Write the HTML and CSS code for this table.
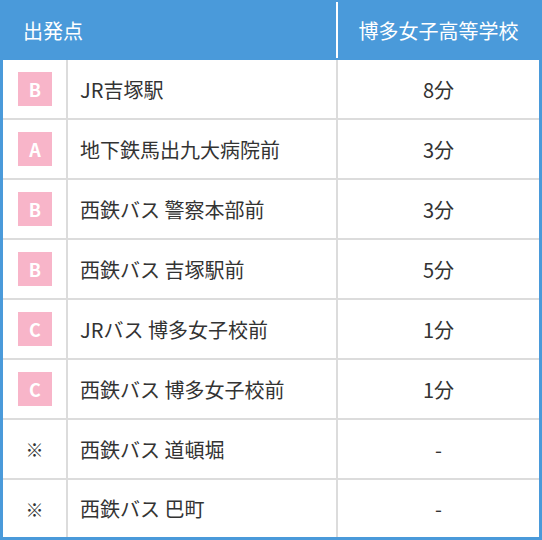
FILE: index.html
```html
<!DOCTYPE html>
<html lang="ja">
<head>
<meta charset="utf-8">
<link rel="stylesheet" href="styles.css">
</head>
<body>
<div class="table">
  <div class="head">
    <div class="head-from">出発点</div>
    <div class="head-school">博多女子高等学校</div>
  </div>
  <div class="row"><div class="mark"><span class="badge">B</span></div><div class="name">JR吉塚駅</div><div class="time">8分</div></div>
  <div class="row"><div class="mark"><span class="badge">A</span></div><div class="name">地下鉄馬出九大病院前</div><div class="time">3分</div></div>
  <div class="row"><div class="mark"><span class="badge">B</span></div><div class="name">西鉄バス 警察本部前</div><div class="time">3分</div></div>
  <div class="row"><div class="mark"><span class="badge">B</span></div><div class="name">西鉄バス 吉塚駅前</div><div class="time">5分</div></div>
  <div class="row"><div class="mark"><span class="badge">C</span></div><div class="name">JRバス 博多女子校前</div><div class="time">1分</div></div>
  <div class="row"><div class="mark"><span class="badge">C</span></div><div class="name">西鉄バス 博多女子校前</div><div class="time">1分</div></div>
  <div class="row"><div class="mark note">※</div><div class="name">西鉄バス 道頓堀</div><div class="time">-</div></div>
  <div class="row last"><div class="mark note">※</div><div class="name">西鉄バス 巴町</div><div class="time">-</div></div>
</div>
</body>
</html>
```
FILE: styles.css
```css
html, body {
  margin: 0;
  padding: 0;
  background: #fff;
}
.table {
  width: 542px;
  height: 540px;
  box-sizing: border-box;
  border: 3px solid #4a9ada;
  border-top: 0;
  font-family: "Noto Sans CJK JP", "Noto Sans", sans-serif;
  color: #333;
  font-size: 20px;
}
.head {
  display: grid;
  grid-template-columns: 333px 1fr;
  height: 60px;
  box-sizing: border-box;
  padding: 2px 0;
  background: #4a9ada;
  color: #fff;
}
.head-from {
  display: flex;
  align-items: center;
  padding-left: 20px;
}
.head-school {
  display: flex;
  align-items: center;
  justify-content: center;
  border-left: 2px solid #fff;
}
.row {
  display: grid;
  grid-template-columns: 63px 270px 1fr;
  height: 60px;
  box-sizing: border-box;
  border-bottom: 2px solid #dcdcdc;
}
.row.last {
  height: 57px;
  border-bottom: 0;
}
.mark {
  display: flex;
  align-items: center;
  justify-content: center;
}
.badge {
  display: flex;
  align-items: center;
  justify-content: center;
  width: 34px;
  height: 34px;
  margin-left: 1px;
  background: #f8b5c9;
  color: #fff;
  font-weight: bold;
  font-size: 18px;
}
.note {
  font-size: 18px;
}
.name {
  display: flex;
  align-items: center;
  padding-left: 12px;
  border-left: 2px solid #dcdcdc;
}
.time {
  display: flex;
  align-items: center;
  justify-content: center;
  border-left: 2px solid #dcdcdc;
}
```
